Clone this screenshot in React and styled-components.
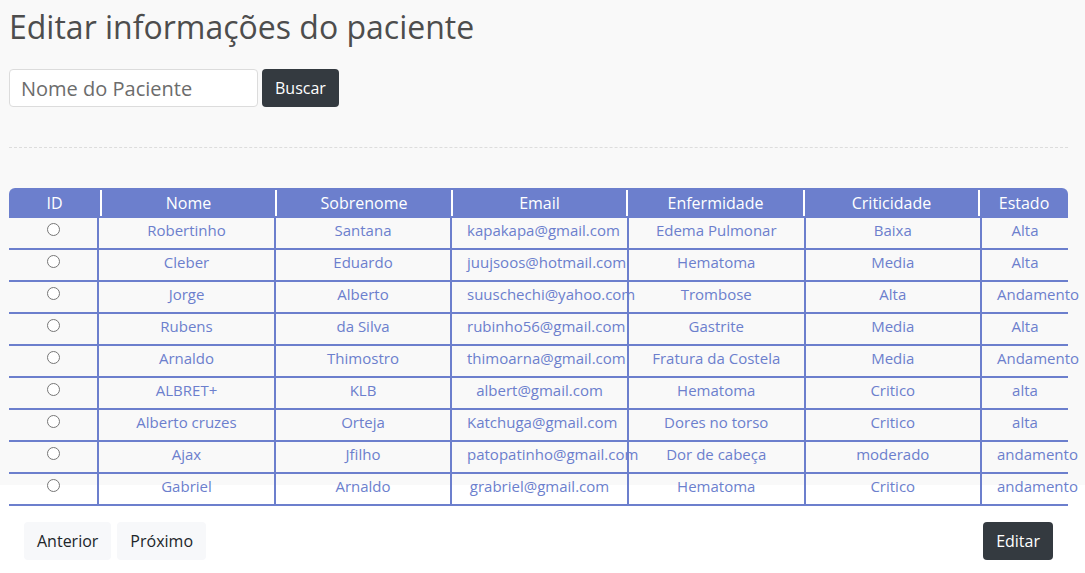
import React from "react";
import styled, { createGlobalStyle } from "styled-components";

const GlobalStyle = createGlobalStyle`
  html, body { margin: 0; padding: 0; }
  body {
    font-family: "Open Sans", "Noto Sans", sans-serif;
    background: #ffffff;
  }
  * { box-sizing: border-box; }
`;

const Page = styled.div`
  min-height: 573px;
  padding: 8px 17px 0 9px;
  background: linear-gradient(#f9f9f9 0, #f9f9f9 485px, #ffffff 485px);
`;

const Title = styled.h2`
  margin: 0;
  font-size: 32px;
  font-weight: 400;
  line-height: 1.2;
  color: #4d4d4d;
`;

const SearchBar = styled.form`
  display: flex;
  gap: 4px;
  margin-top: 23px;
`;

const SearchInput = styled.input`
  width: 249px;
  height: 38px;
  padding: 0 11px;
  border: 1px solid #dcdcdc;
  border-radius: 4px;
  background: #fff;
  font-family: inherit;
  font-size: 20px;
  color: #495057;
  outline: none;
  &::placeholder { color: #6c6c6c; }
`;

const Button = styled.button`
  height: 38px;
  padding: 0 13px;
  border: none;
  border-radius: 4px;
  font-family: inherit;
  font-size: 16px;
  line-height: 24px;
  cursor: pointer;
  background: ${(p) => (p.$dark ? "#343a40" : "#f7f8fa")};
  color: ${(p) => (p.$dark ? "#ffffff" : "#212529")};
`;

const Divider = styled.hr`
  margin: 40px 0 0;
  border: none;
  border-top: 1px dashed #dddddd;
  height: 0;
`;

const Table = styled.div`
  margin-top: 40px;
  width: 1059px;
`;

const HEAD_COLS = "91px 175px 176px 175px 177px 175px 90px";
const BODY_COLS = "88px 177px 176px 177px 176.5px 176.5px 88px";

const HeadRow = styled.div`
  display: grid;
  grid-template-columns: ${HEAD_COLS};
  height: 30px;
  background: #6c7fcd;
  border-radius: 6px 6px 0 0;
`;

const HeadCell = styled.div`
  margin: 2px 0;
  display: flex;
  align-items: center;
  justify-content: center;
  color: #ffffff;
  font-size: 16px;
  line-height: 24px;
  white-space: nowrap;
  border-left: ${(p) => (p.$first ? "none" : "2px solid #ffffff")};
`;

const BodyRow = styled.div`
  display: grid;
  grid-template-columns: ${BODY_COLS};
  height: 32px;
  border-bottom: 2px solid #6c7fcd;
`;

const Cell = styled.div`
  padding: 0 15px;
  text-align: center;
  white-space: nowrap;
  font-size: 15px;
  line-height: 24px;
  color: #6c7fcd;
  border-left: ${(p) => (p.$first ? "none" : "2px solid #6c7fcd")};
`;

const Radio = styled.input`
  display: block;
  margin: 5px auto 0;
  width: 13px;
  height: 13px;
`;

const Footer = styled.div`
  display: flex;
  justify-content: space-between;
  align-items: center;
  padding: 0 15px;
  margin-top: 16px;
`;

const Pager = styled.div`
  display: flex;
  gap: 6px;
`;

const headers = ["ID", "Nome", "Sobrenome", "Email", "Enfermidade", "Criticidade", "Estado"];

const rows = [
  ["Robertinho", "Santana", "kapakapa@gmail.com", "Edema Pulmonar", "Baixa", "Alta"],
  ["Cleber", "Eduardo", "juujsoos@hotmail.com", "Hematoma", "Media", "Alta"],
  ["Jorge", "Alberto", "suuschechi@yahoo.com", "Trombose", "Alta", "Andamento"],
  ["Rubens", "da Silva", "rubinho56@gmail.com", "Gastrite", "Media", "Alta"],
  ["Arnaldo", "Thimostro", "thimoarna@gmail.com", "Fratura da Costela", "Media", "Andamento"],
  ["ALBRET+", "KLB", "albert@gmail.com", "Hematoma", "Critico", "alta"],
  ["Alberto cruzes", "Orteja", "Katchuga@gmail.com", "Dores no torso", "Critico", "alta"],
  ["Ajax", "Jfilho", "patopatinho@gmail.com", "Dor de cabeça", "moderado", "andamento"],
  ["Gabriel", "Arnaldo", "grabriel@gmail.com", "Hematoma", "Critico", "andamento"],
];

export default function App() {
  return (
    <>
      <GlobalStyle />
      <Page>
        <Title>Editar informações do paciente</Title>
        <SearchBar onSubmit={(e) => e.preventDefault()}>
          <SearchInput placeholder="Nome do Paciente" />
          <Button $dark type="submit">Buscar</Button>
        </SearchBar>
        <Divider />
        <Table>
          <HeadRow>
            {headers.map((h, i) => (
              <HeadCell key={h} $first={i === 0}>{h}</HeadCell>
            ))}
          </HeadRow>
          {rows.map((r, ri) => (
            <BodyRow key={ri}>
              <Cell $first>
                <Radio type="radio" name="paciente" />
              </Cell>
              {r.map((v, ci) => (
                <Cell key={ci}>{v}</Cell>
              ))}
            </BodyRow>
          ))}
        </Table>
        <Footer>
          <Pager>
            <Button>Anterior</Button>
            <Button>Próximo</Button>
          </Pager>
          <Button $dark>Editar</Button>
        </Footer>
      </Page>
    </>
  );
}
